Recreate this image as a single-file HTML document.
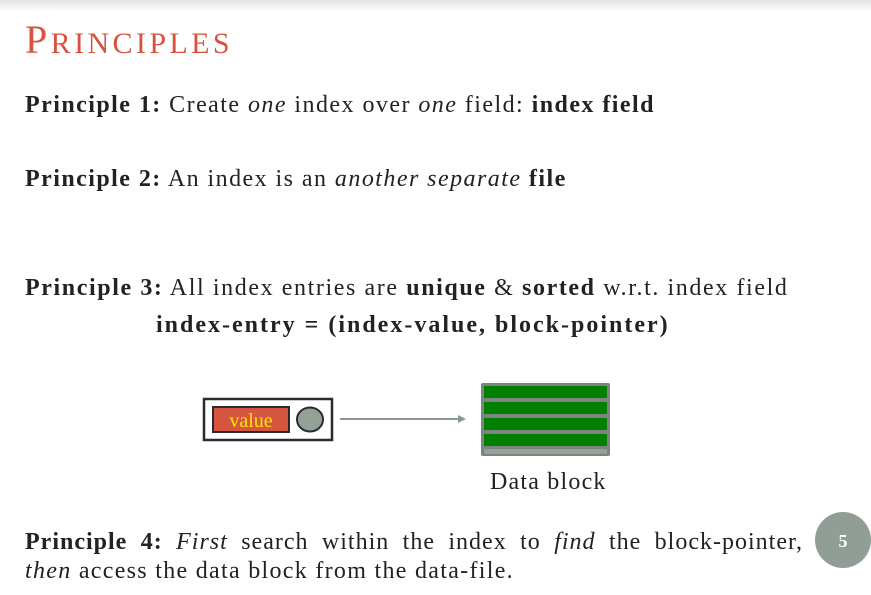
<!DOCTYPE html>
<html><head><meta charset="utf-8"><style>
body{margin:0;width:871px;height:595px;background:#fff;position:relative;overflow:hidden;font-family:"Liberation Serif",serif;color:#222;}
.sh{position:absolute;left:0;top:0;width:871px;height:12px;background:linear-gradient(#e4e4e4,#fff);}
.t{position:absolute;white-space:nowrap;font-size:24px;line-height:28px;letter-spacing:1.45px;}
b{font-weight:bold;}
</style></head><body>
<div class="sh"></div>
<div class="t" style="left:25px;top:18px;color:#d8533f;font-size:40px;line-height:44px;letter-spacing:3.4px">P<span style="font-size:30px">RINCIPLES</span></div>
<div class="t" style="left:25px;top:91px"><b>Principle 1:</b> Create <i>one</i> index over <i>one</i> field: <b>index field</b></div>
<div class="t" style="left:25px;top:165px"><b>Principle 2:</b> An index is an <i>another separate</i> <b>file</b></div>
<div class="t" style="left:25px;top:274px;letter-spacing:1.6px"><b>Principle 3:</b> All index entries are <b>unique</b> &amp; <b>sorted</b> w.r.t. index field</div>
<div class="t" style="left:156px;top:311px;letter-spacing:2px"><b>index-entry = (index-value, block-pointer)</b></div>
<svg style="position:absolute;left:0;top:0" width="871" height="595">
<rect x="204" y="399" width="128" height="41" fill="#fff" stroke="#2a2a33" stroke-width="2.5"/>
<rect x="213" y="407" width="76" height="25" fill="#d6553f" stroke="#2a2a33" stroke-width="2"/>
<text x="251" y="427" font-family="Liberation Serif" font-size="20" fill="#ffe600" text-anchor="middle">value</text>
<ellipse cx="310" cy="419.5" rx="13" ry="12" fill="#94a197" stroke="#2a2a33" stroke-width="2"/>
<line x1="340" y1="419" x2="462" y2="419" stroke="#8a9890" stroke-width="2"/>
<polygon points="466,419 458,415 458,423" fill="#8a9890"/>
<rect x="481" y="383" width="129" height="73" fill="#7b857e" rx="2"/>
<rect x="484" y="386" width="123" height="12" fill="#007f00"/>
<rect x="484" y="402" width="123" height="12" fill="#007f00"/>
<rect x="484" y="418" width="123" height="12" fill="#007f00"/>
<rect x="484" y="434" width="123" height="12" fill="#007f00"/>
<rect x="484" y="449" width="123" height="5" fill="#95a098"/>
<circle cx="843" cy="540" r="28" fill="#909e95"/>
<text x="843" y="547" font-family="Liberation Serif" font-weight="bold" font-size="18" fill="#fff" text-anchor="middle">5</text>
</svg>
<div class="t" style="left:490px;top:468px;letter-spacing:1.2px">Data block</div>
<div class="t" style="left:25px;top:528px;width:778px;text-align:justify;text-align-last:justify;white-space:normal;letter-spacing:1px"><b>Principle 4:</b> <i>First</i> search within the index to <i>find</i> the block-pointer,</div>
<div class="t" style="left:25px;top:557px;letter-spacing:1.3px"><i>then</i> access the data block from the data-file.</div>
</body></html>
